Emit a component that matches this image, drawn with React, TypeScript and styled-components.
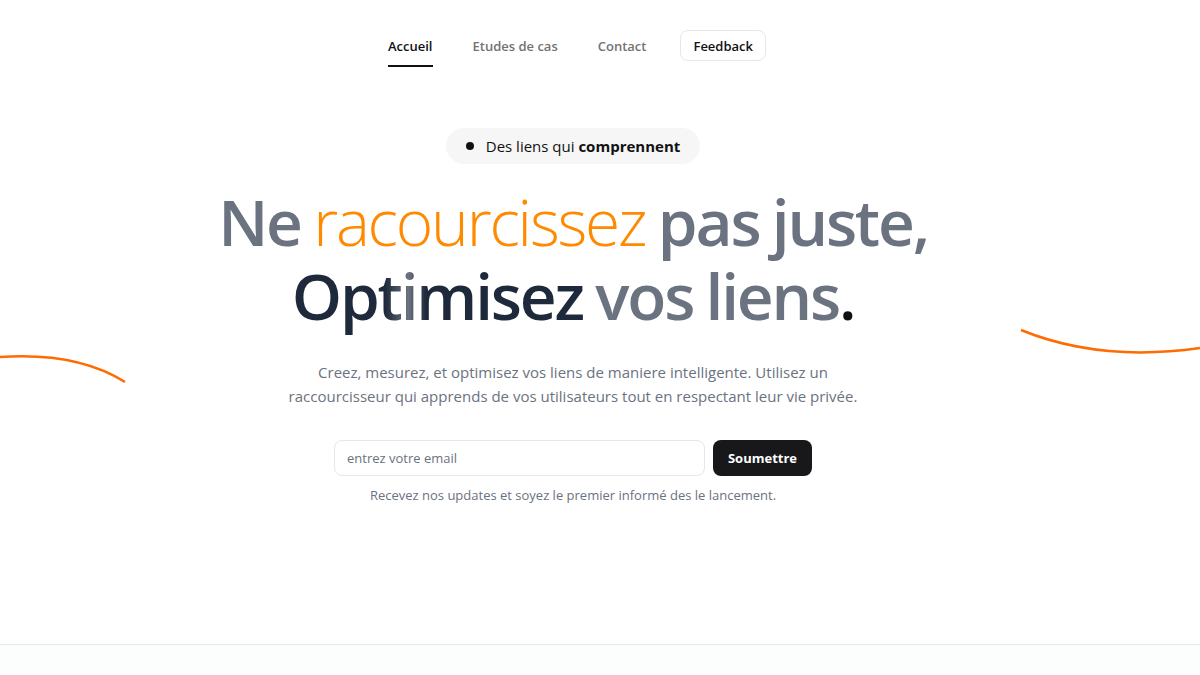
import React from 'react';
import styled, { createGlobalStyle } from 'styled-components';

// Styles globaux de la page
const GlobalStyle = createGlobalStyle`
  * { box-sizing: border-box; }
  html, body { margin: 0; padding: 0; background: #ffffff; }
  body {
    font-family: "Open Sans", "Noto Sans", "Liberation Sans", sans-serif;
    color: #111827;
  }
`;

// Page d'accueil
const App: React.FC = () => {
  return (
    <>
      <GlobalStyle />
      <Page>
        <Nav>
          <NavLink $active>Accueil</NavLink>
          <NavLink>Etudes de cas</NavLink>
          <NavLink>Contact</NavLink>
          <FeedbackButton>Feedback</FeedbackButton>
        </Nav>

        <Hero>
          {/* courbes décoratives orange */}
          <CurveLeft width="130" height="40" viewBox="0 0 130 40">
            <path d="M0 9 C 45 6, 90 12, 125 34" fill="none" stroke="#ff6b00" strokeWidth="2.5" />
          </CurveLeft>
          <CurveRight width="180" height="40" viewBox="0 0 180 40">
            <path d="M1 12 C 50 32, 110 40, 180 30" fill="none" stroke="#ff6b00" strokeWidth="2.5" />
          </CurveRight>

          <Badge>
            <Dot />
            <span>Des liens qui <strong>comprennent</strong></span>
          </Badge>

          <Title>
            <Line>
              <Gray>Ne</Gray> <Orange>racourcissez</Orange> <Gray>pas juste,</Gray>
            </Line>
            <Line>
              <Shine>Optimisez</Shine> <Gray>vos liens</Gray><Period>.</Period>
            </Line>
          </Title>

          <Lead>
            Creez, mesurez, et optimisez vos liens de maniere intelligente. Utilisez un
            <br />
            raccourcisseur qui apprends de vos utilisateurs tout en respectant leur vie privée.
          </Lead>

          <Form onSubmit={(e) => e.preventDefault()}>
            <EmailInput type="email" placeholder="entrez votre email" />
            <SubmitButton type="submit">Soumettre</SubmitButton>
          </Form>
          <Caption>Recevez nos updates et soyez le premier informé des le lancement.</Caption>
        </Hero>

        <Footer />
      </Page>
    </>
  );
};

export default App;

// Conteneur principal
const Page = styled.div`
  min-height: 675px;
  display: flex;
  flex-direction: column;
`;

// Barre de navigation (contenu décalé vers la gauche comme dans la maquette)
const Nav = styled.nav`
  display: flex;
  justify-content: center;
  align-items: flex-start;
  gap: 40px;
  padding: 30px 46px 0 0;
  height: 67px;
`;

const NavLink = styled.a<{ $active?: boolean }>`
  font-size: 13px;
  font-weight: 600;
  color: ${(p) => (p.$active ? '#111111' : '#737373')};
  text-decoration: none;
  cursor: pointer;
  height: 37px;
  padding-top: 7px;
  border-bottom: 2px solid ${(p) => (p.$active ? '#111111' : 'transparent')};
`;

const FeedbackButton = styled.button`
  font-family: inherit;
  font-size: 13px;
  font-weight: 600;
  color: #111111;
  background: #ffffff;
  border: 1px solid #e5e7eb;
  border-radius: 8px;
  height: 31px;
  padding: 0 12px;
  margin-left: -6px;
  cursor: pointer;
`;

// Section héro
const Hero = styled.section`
  position: relative;
  display: flex;
  flex-direction: column;
  align-items: center;
  padding: 61px 54px 0 0;
  height: 577px;
`;

const CurveLeft = styled.svg`
  position: absolute;
  left: 0;
  top: 281px;
`;

const CurveRight = styled.svg`
  position: absolute;
  right: 0;
  top: 251px;
`;

const Badge = styled.div`
  display: flex;
  align-items: center;
  gap: 12px;
  height: 36px;
  padding: 0 20px;
  border-radius: 999px;
  background: #f6f6f6;
  font-size: 15px;
  color: #111111;
  strong { font-weight: 700; }
`;

const Dot = styled.span`
  width: 8px;
  height: 8px;
  border-radius: 50%;
  background: #111111;
`;

const Title = styled.h1`
  margin: 21px 0 0;
  font-size: 64px;
  line-height: 74px;
  font-weight: 600;
  text-align: center;
  letter-spacing: -2.2px;
  word-spacing: -2px;
`;

const Line = styled.div``;

const Gray = styled.span`
  color: #6b7280;
`;

const Orange = styled.span`
  color: #ff8a00;
  font-weight: 300;
`;

const Shine = styled.span`
  background: linear-gradient(90deg, #1e293b 0%, #1e293b 32%, #6b7280 40%, #1e293b 46%, #1e293b 100%);
  -webkit-background-clip: text;
  background-clip: text;
  color: transparent;
`;

const Period = styled.span`
  color: #111111;
`;

const Lead = styled.p`
  margin: 27px 0 0;
  font-size: 15px;
  line-height: 24px;
  color: #6b7280;
  text-align: center;
`;

const Form = styled.form`
  display: flex;
  gap: 8px;
  margin-top: 32px;
`;

const EmailInput = styled.input`
  width: 371px;
  height: 36px;
  padding: 0 12px;
  font-family: inherit;
  font-size: 13px;
  border: 1px solid #e5e7eb;
  border-radius: 8px;
  outline: none;
  &::placeholder { color: #6b7280; }
`;

const SubmitButton = styled.button`
  height: 36px;
  width: 99px;
  padding: 0;
  font-family: inherit;
  font-size: 13px;
  font-weight: 700;
  color: #ffffff;
  background: #18181b;
  border: none;
  border-radius: 8px;
  cursor: pointer;
`;

const Caption = styled.p`
  margin: 10px 0 0;
  font-size: 13px;
  color: #6b7280;
`;

// Pied de page
const Footer = styled.footer`
  flex: 1;
  border-top: 1px solid #e5e7eb;
  background: #fcfdfd;
  min-height: 31px;
`;
